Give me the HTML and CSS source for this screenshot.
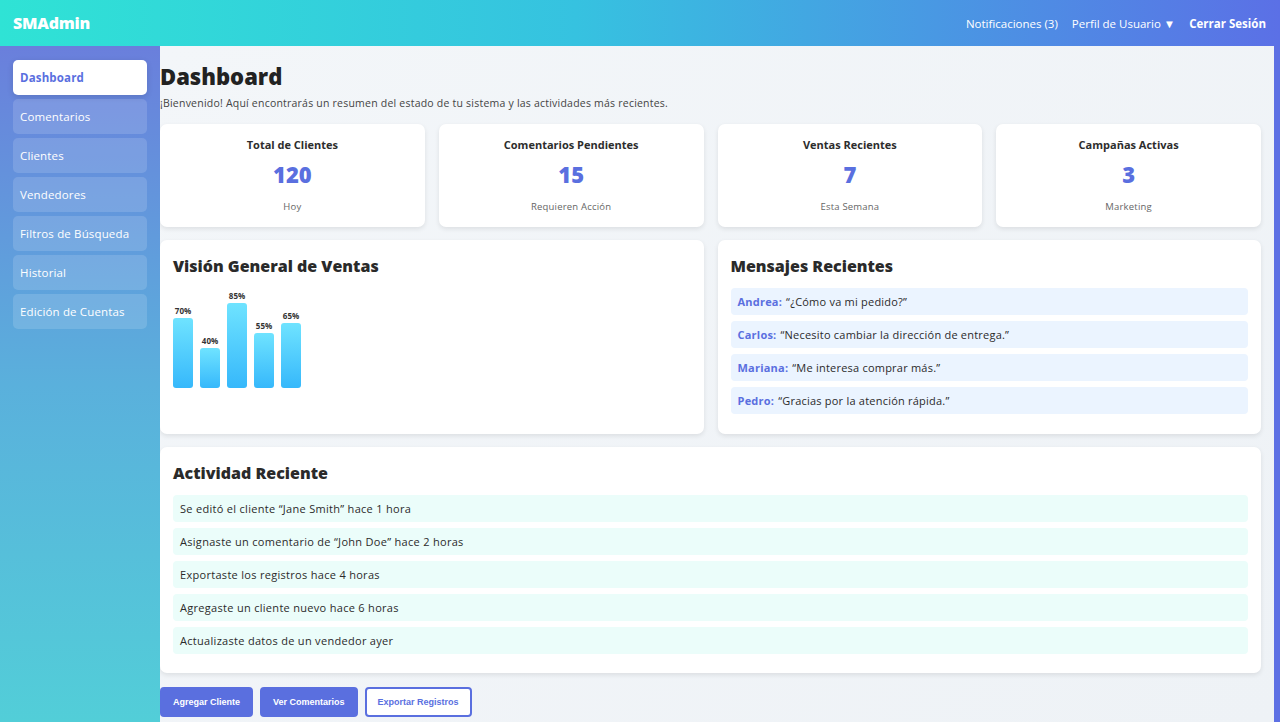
FILE: index.html
```html
<!DOCTYPE html>
<html lang="es">
<head>
<meta charset="utf-8">
<title>SMAdmin</title>
<link rel="stylesheet" href="styles.css">
</head>
<body>
<header class="topbar">
  <div class="logo">SMAdmin</div>
  <nav class="topnav">
    <a class="topnav-link">Notificaciones (3)</a>
    <a class="topnav-link">Perfil de Usuario ▼</a>
    <a class="topnav-link strong">Cerrar Sesión</a>
  </nav>
</header>
<div class="layout">
  <aside class="sidebar">
    <a class="side-item active">Dashboard</a>
    <a class="side-item">Comentarios</a>
    <a class="side-item">Clientes</a>
    <a class="side-item">Vendedores</a>
    <a class="side-item">Filtros de Búsqueda</a>
    <a class="side-item">Historial</a>
    <a class="side-item">Edición de Cuentas</a>
  </aside>
  <main class="main">
    <h1 class="page-title">Dashboard</h1>
    <p class="page-sub">¡Bienvenido! Aquí encontrarás un resumen del estado de tu sistema y las actividades más recientes.</p>

    <section class="stats">
      <div class="card stat">
        <div class="stat-title">Total de Clientes</div>
        <div class="stat-num">120</div>
        <div class="stat-note">Hoy</div>
      </div>
      <div class="card stat">
        <div class="stat-title">Comentarios Pendientes</div>
        <div class="stat-num">15</div>
        <div class="stat-note">Requieren Acción</div>
      </div>
      <div class="card stat">
        <div class="stat-title">Ventas Recientes</div>
        <div class="stat-num">7</div>
        <div class="stat-note">Esta Semana</div>
      </div>
      <div class="card stat">
        <div class="stat-title">Campañas Activas</div>
        <div class="stat-num">3</div>
        <div class="stat-note">Marketing</div>
      </div>
    </section>

    <section class="row2">
      <div class="card panel">
        <h2 class="panel-title">Visión General de Ventas</h2>
        <div class="chart">
          <div class="bar-col"><span class="bar-label">70%</span><div class="bar" style="height:70px"></div></div>
          <div class="bar-col"><span class="bar-label">40%</span><div class="bar" style="height:40px"></div></div>
          <div class="bar-col"><span class="bar-label">85%</span><div class="bar" style="height:85px"></div></div>
          <div class="bar-col"><span class="bar-label">55%</span><div class="bar" style="height:55px"></div></div>
          <div class="bar-col"><span class="bar-label">65%</span><div class="bar" style="height:65px"></div></div>
        </div>
      </div>
      <div class="card panel">
        <h2 class="panel-title">Mensajes Recientes</h2>
        <ul class="list msgs">
          <li class="msg"><b>Andrea:</b> “¿Cómo va mi pedido?”</li>
          <li class="msg"><b>Carlos:</b> “Necesito cambiar la dirección de entrega.”</li>
          <li class="msg"><b>Mariana:</b> “Me interesa comprar más.”</li>
          <li class="msg"><b>Pedro:</b> “Gracias por la atención rápida.”</li>
        </ul>
      </div>
    </section>

    <section class="card panel activity">
      <h2 class="panel-title">Actividad Reciente</h2>
      <ul class="list acts">
        <li class="act">Se editó el cliente “Jane Smith” hace 1 hora</li>
        <li class="act">Asignaste un comentario de “John Doe” hace 2 horas</li>
        <li class="act">Exportaste los registros hace 4 horas</li>
        <li class="act">Agregaste un cliente nuevo hace 6 horas</li>
        <li class="act">Actualizaste datos de un vendedor ayer</li>
      </ul>
    </section>

    <div class="actions">
      <button class="btn">Agregar Cliente</button>
      <button class="btn">Ver Comentarios</button>
      <button class="btn outline">Exportar Registros</button>
    </div>
  </main>
</div>
</body>
</html>
```

FILE: styles.css
```css
* { box-sizing: border-box; }

html, body { height: 100%; }

body {
  margin: 0;
  font-family: "Open Sans", "Noto Sans", sans-serif;
  color: #2b2b2b;
  background: #5d70e4;
  overflow: hidden;
}

.topbar {
  height: 46px;
  display: flex;
  align-items: center;
  justify-content: space-between;
  padding: 0 14px 0 13px;
  background: linear-gradient(90deg, #2fe3d5 0%, #36c2e0 45%, #5b70e6 100%);
  color: #fff;
}

.logo {
  font-size: 16px;
  font-weight: 800;
  letter-spacing: -0.2px;
}

.topnav {
  display: flex;
  gap: 14px;
  font-size: 11.5px;
}

.topnav-link { color: #fff; }
.topnav-link.strong { font-weight: 700; }

.layout {
  display: flex;
  height: calc(100% - 46px);
}

.sidebar {
  width: 160px;
  flex: none;
  padding: 14px 13px;
  display: flex;
  flex-direction: column;
  gap: 4px;
  background: linear-gradient(180deg, #6a7fdc 0%, #5ab0dc 50%, #52ced8 100%);
}

.side-item {
  height: 35px;
  display: flex;
  align-items: center;
  padding: 0 7px;
  border-radius: 5px;
  font-size: 11.5px;
  letter-spacing: 0.15px;
  color: #fff;
  background: rgba(255, 255, 255, 0.14);
}

.side-item.active {
  background: #fff;
  color: #5a6fdf;
  font-weight: 700;
  box-shadow: 0 2px 6px rgba(0, 0, 0, 0.12);
}

.main {
  flex: 1;
  margin-right: 6px;
  padding: 16px 13px 0 0;
  background: linear-gradient(135deg, #f3f6f9 0%, #eef2f6 100%);
  overflow: hidden;
}

.page-title {
  margin: 0;
  font-size: 22px;
  font-weight: 800;
  line-height: 28px;
  color: #222;
}

.page-sub {
  margin: 6px 0 14px;
  font-size: 10.5px;
  letter-spacing: 0.22px;
  color: #444;
}

.card {
  background: #fff;
  border-radius: 7px;
  box-shadow: 0 2px 5px rgba(0, 0, 0, 0.09);
}

.stats {
  display: grid;
  grid-template-columns: repeat(4, 1fr);
  gap: 14px;
}

.stat {
  height: 103px;
  display: flex;
  flex-direction: column;
  align-items: center;
  padding-top: 13px;
}

.stat-title {
  font-size: 11px;
  font-weight: 700;
  color: #2d2d2d;
}

.stat-num {
  margin-top: 7px;
  font-size: 22px;
  font-weight: 800;
  color: #5a6fdf;
  line-height: 30px;
}

.stat-note {
  margin-top: 11px;
  font-size: 9.5px;
  letter-spacing: 0.2px;
  color: #666;
}

.row2 {
  display: grid;
  grid-template-columns: 1fr 1fr;
  gap: 14px;
  margin-top: 13px;
}

.panel {
  padding: 13px 13px;
  min-height: 194px;
}

.panel-title {
  margin: 0 0 9px;
  font-size: 16px;
  font-weight: 800;
  line-height: 26px;
  color: #2a2a2a;
}

.chart {
  display: flex;
  align-items: flex-end;
  gap: 7px;
  height: 100px;
}

.bar-col {
  display: flex;
  flex-direction: column;
  align-items: center;
  width: 20px;
}

.bar-label {
  font-size: 8px;
  font-weight: 700;
  color: #333;
  margin-bottom: 2px;
}

.bar {
  width: 20px;
  border-radius: 3px;
  background: linear-gradient(180deg, #6fe3ff 0%, #36b8fb 100%);
}

.list {
  list-style: none;
  margin: 0;
  padding: 0;
  display: flex;
  flex-direction: column;
  gap: 6px;
}

.msg {
  height: 27px;
  display: flex;
  align-items: center;
  gap: 4px;
  padding: 0 7px;
  border-radius: 4px;
  background: #ebf4ff;
  font-size: 11px;
  letter-spacing: 0.22px;
  color: #2b2b2b;
}

.msg b { color: #5a6fdf; font-weight: 700; }

.activity {
  margin-top: 13px;
  min-height: 0;
  padding-bottom: 19px;
}

.act {
  height: 27px;
  display: flex;
  align-items: center;
  padding: 0 7px;
  border-radius: 4px;
  background: #ebfdfa;
  font-size: 11px;
  letter-spacing: 0.3px;
  color: #2b2b2b;
}

.actions {
  display: flex;
  gap: 7px;
  margin-top: 14px;
}

.btn {
  height: 30px;
  padding: 0 11px;
  border: 2px solid #5a6fdf;
  border-radius: 4px;
  background: #5a6fdf;
  color: #fff;
  font-family: "Liberation Sans", Arial, sans-serif;
  font-size: 9px;
  font-weight: 700;
}

.btn.outline {
  background: #fff;
  color: #5a6fdf;
}
```
